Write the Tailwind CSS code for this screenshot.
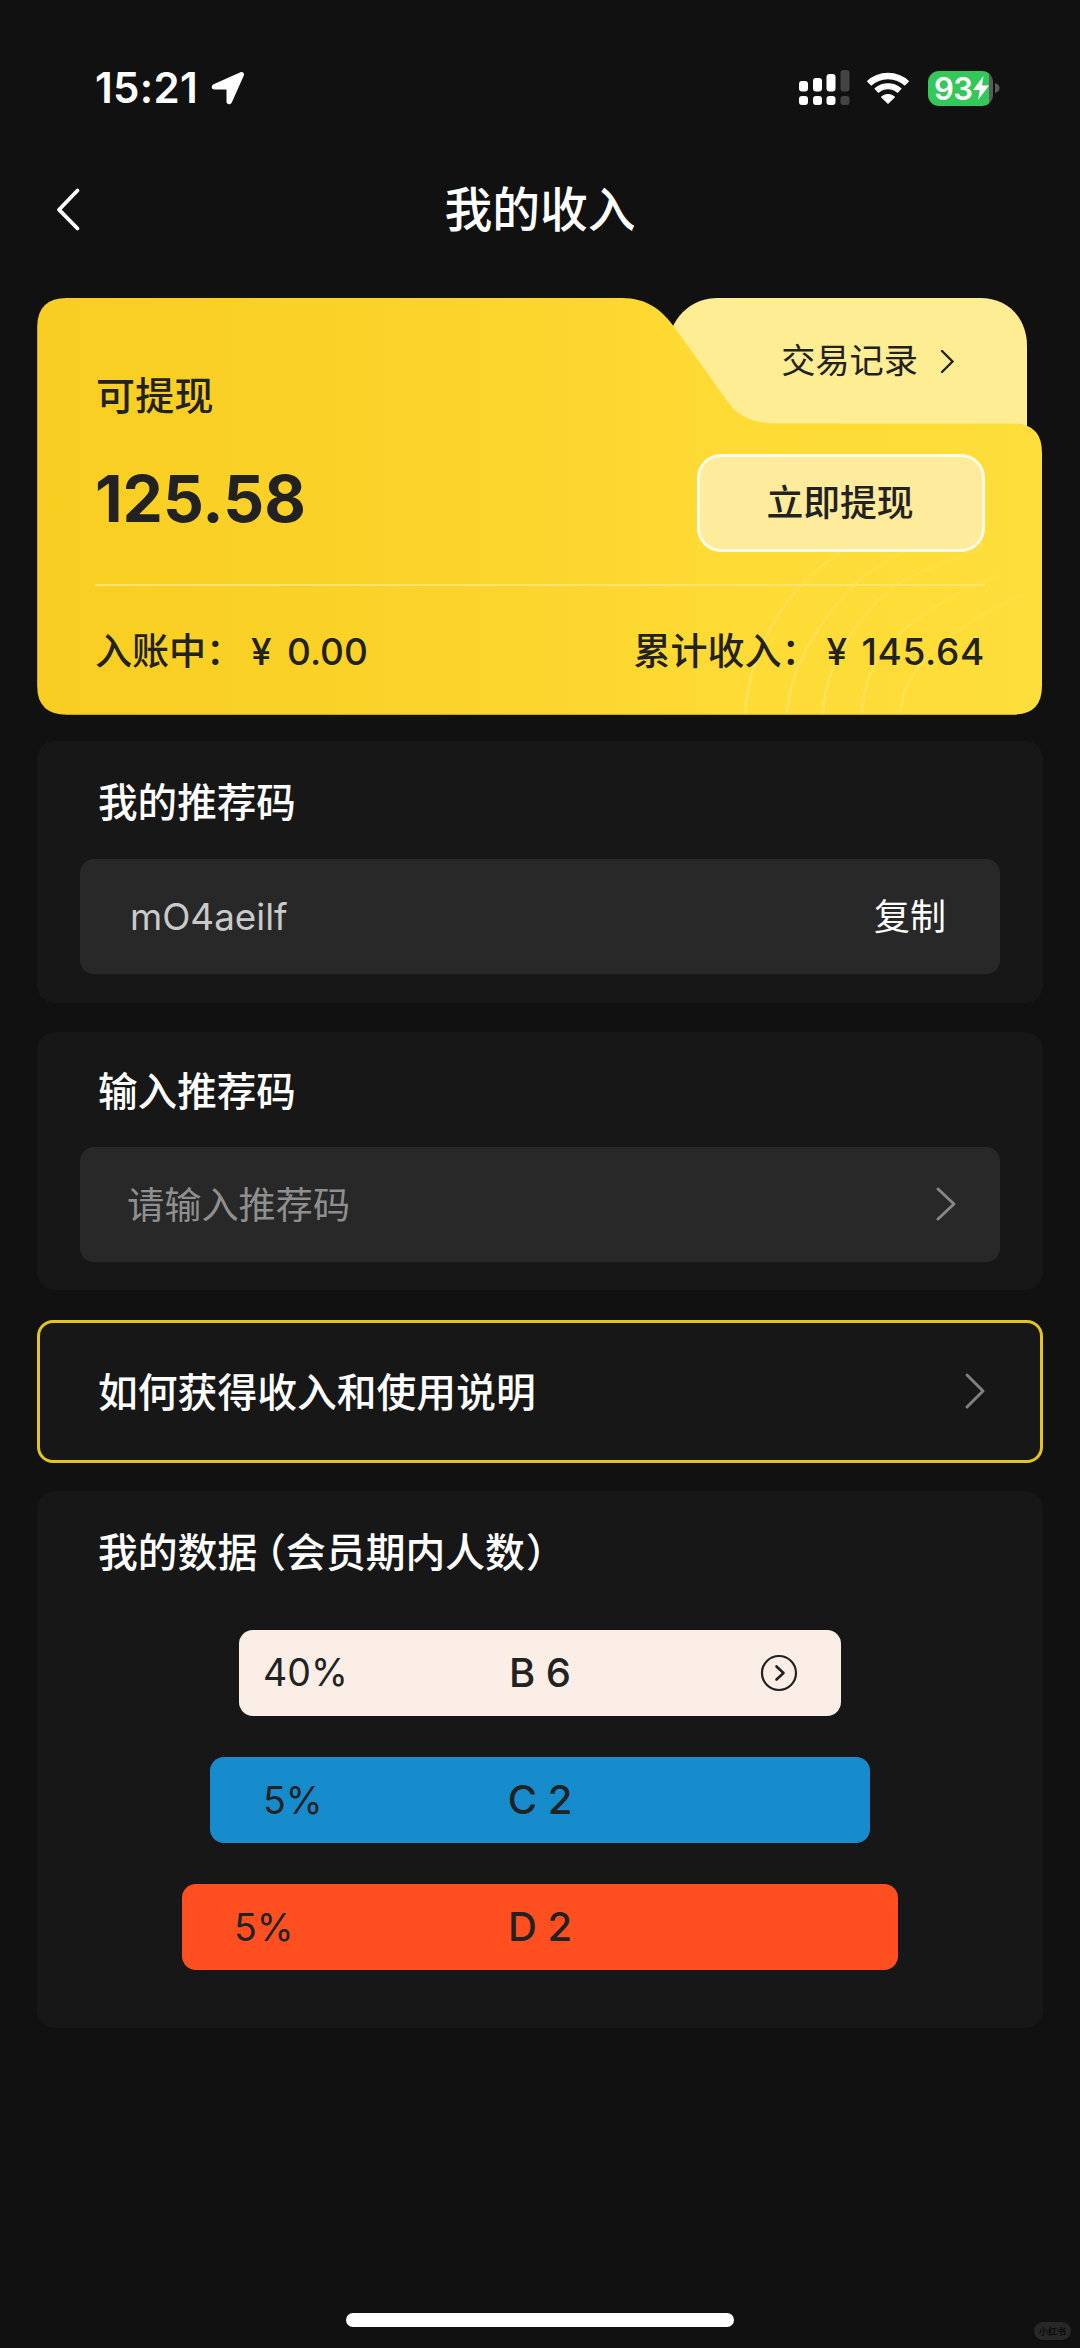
<!DOCTYPE html>
<html lang="zh-CN">
<head>
<meta charset="utf-8">
<title>我的收入</title>
<script src="https://cdn.jsdelivr.net/npm/@tailwindcss/browser@4"></script>
</head>
<body class="bg-[#111111]">
<div class="relative flex h-[2348px] w-[1080px] flex-col overflow-hidden bg-[#111111] font-['Inter','Noto_Sans_CJK_SC',sans-serif] text-white">

  <!-- status bar -->
  <header class="flex h-[176px] items-center justify-between pl-[95px] pr-[80px]">
    <div class="flex items-center gap-[13px]">
      <span class="text-[42px] font-semibold leading-none tracking-[0.3px]">15:21</span>
      <svg class="h-[34px] w-[34px]" viewBox="0 0 34 34" fill="#fff"><path d="M29.5 1.3 2.6 13.2C-.2 14.500.3 18.500 3.400 18.500H15.500V30.600C15.500 33.800 19.500 34.200 20.800 31.500L32.800 4.600C33.800 2.300 31.700.3 29.500 1.300Z"/></svg>
    </div>
    <div class="flex items-center">
      <svg class="h-[36px] w-[52px]" viewBox="0 0 52 36" fill="#fff">
        <rect x="0" y="11" width="9" height="10.500" rx="3"/><rect x="14" y="8" width="9" height="13.500" rx="3"/><rect x="27.500" y="4" width="9" height="17.500" rx="3"/><rect x="41.500" y="0" width="9" height="21.500" rx="3" fill="#444"/>
        <rect x="0" y="26" width="9" height="9" rx="3"/><rect x="14" y="26" width="9" height="9" rx="3"/><rect x="27.500" y="26" width="9" height="9" rx="3"/><rect x="41.500" y="26" width="9" height="9" rx="3" fill="#444"/>
      </svg>
      <svg class="ml-[15px] h-[34px] w-[44px]" viewBox="0 0 44 34">
        <path d="M3 12.500A27.500 27.500 0 0 1 41 12.500" fill="none" stroke="#fff" stroke-width="6.500"/>
        <path d="M10.300 19.800A17.200 17.200 0 0 1 33.700 19.800" fill="none" stroke="#fff" stroke-width="6"/>
        <path d="M22 32.500 15.300 26A10 10 0 0 1 28.700 26Z" fill="#fff" stroke="#fff" stroke-linejoin="round"/>
      </svg>
      <div class="ml-[18px] flex h-[35px] w-[65px] items-center rounded-[11px] bg-[linear-gradient(90deg,#34c759_61px,#5a5a5c_61px)] pl-[6px]">
        <span class="text-[31px] font-semibold leading-none tracking-[-0.5px]">93</span>
        <svg class="h-[24px] w-[16px]" viewBox="0 0 16 24" fill="#fff"><path d="M10.500 0 0 14H6.800L5 24 16 9.500H9Z"/></svg>
      </div>
      <svg class="ml-[2px] h-[10px] w-[5px]" viewBox="0 0 5 10" fill="#5a5a5c"><path d="M0 0Q4.500 1.500 4.500 5T0 10Z"/></svg>
    </div>
  </header>

  <!-- title bar -->
  <nav class="grid h-[122px] grid-cols-[1fr_auto_1fr] items-start pt-[10px]">
    <svg class="ml-[55px] mt-px h-[46px] w-[26px]" viewBox="0 0 26 46" fill="none" stroke="#fff" stroke-width="3.800" stroke-linecap="round" stroke-linejoin="round"><path d="M22.500 3.500 4 22.700 22.500 41.500"/></svg>
    <h1 class="text-[47.800px] font-medium leading-[48px]">我的收入</h1>
  </nav>

  <main class="flex flex-col px-[37px]">
    <!-- balance card -->
    <section class="relative h-[417px] text-[#222]">
      <svg class="absolute inset-0 h-[417px] w-[1006px]" viewBox="37 298 1006 417">
        <defs>
          <linearGradient id="gold"><stop offset="0" stop-color="#f9ce22"/><stop offset=".4" stop-color="#fbd32a"/><stop offset=".7" stop-color="#fedb35"/><stop offset="1" stop-color="#fede3b"/></linearGradient>
          <linearGradient id="ring" gradientUnits="userSpaceOnUse" x1="800" y1="714" x2="920" y2="560"><stop offset="0" stop-color="#fff" stop-opacity=".17"/><stop offset="1" stop-color="#fff" stop-opacity=".04"/></linearGradient>
        </defs>
        <path d="M668 340C674 315 692 298 718 298H980C1008 298 1027 318 1027 346V440H760Z" fill="#feed92"/>
        <path d="M67 298H622C647 298 662 310 675 328L728 402C739 418 755 423.500 780 423.500H1013Q1042 423.500 1042 453V686Q1042 714.700 1013 714.700H67Q37.200 714.700 37.200 686V327Q37.200 298 67 298Z" fill="url(#gold)"/>
        <g fill="none" stroke="url(#ring)" stroke-width="2.800">
          <path d="M745 714C748 665 771 617 800 587Q830 555 868 535"/><path d="M787 714C790 665 822 617 857 582Q871 568 920 542"/><path d="M823 714C824 665 860 612 897 585Q918 570 985 548"/><path d="M862 714C864 650 912 618 970 587L1000 575"/><path d="M900 714C903 665 952 628 1020 595"/>
        </g>
      </svg>
      <a class="absolute right-[88px] top-[43px] flex items-center gap-[22px] text-[34.200px] leading-[40px]">交易记录
        <svg class="h-[25px] w-[15px]" viewBox="0 0 15 25" fill="none" stroke="#222" stroke-width="2.400" stroke-linecap="round"><path d="M2 2 12.500 12.500 2 23"/></svg>
      </a>
      <div class="relative flex h-[286px] items-end justify-between pb-[32px] pl-[58px] pr-[58px]">
        <div class="flex flex-col pb-[23px]">
          <p class="pl-px text-[39px] font-medium leading-[40px] tracking-[0.300px]">可提现</p>
          <p class="mt-[53px] text-[64px] font-bold leading-[60px]">125.58</p>
        </div>
        <button class="h-[98px] w-[288px] rounded-[24px] border-[3px] border-[#fffbe6] bg-[#feeb9b] pr-[2px] text-[36.800px] font-medium leading-none">立即提现</button>
      </div>
      <div class="relative mx-[58px] h-[2px] bg-[#fee56c]"></div>
      <div class="relative flex justify-between px-[58px] pt-[43px] text-[37px] font-medium leading-[46px]">
        <p class="flex items-baseline"><span class="w-[156px]">入账中：</span><span class="w-[36px] text-[37px]">¥</span><span>0.00</span></p>
        <p class="flex items-baseline"><span class="w-[193px]">累计收入：</span><span class="w-[35px] text-[37px]">¥</span><span class="tracking-[0.700px]">145.64</span></p>
      </div>
    </section>

    <!-- my code -->
    <section class="mt-[26px] h-[262px] rounded-[18px] bg-[#171717] px-[43px] pt-[38px]">
      <h2 class="pl-[18px] text-[39.600px] font-medium leading-[48px]">我的推荐码</h2>
      <div class="mt-[32px] flex h-[115px] items-center justify-between rounded-[14px] bg-[#282828] pl-[50px] pr-[54px]">
        <span class="text-[36.800px] text-[#cacaca]">mO4aeilf</span>
        <button class="text-[36px]">复制</button>
      </div>
    </section>

    <!-- enter code -->
    <section class="mt-[29px] h-[258px] rounded-[18px] bg-[#171717] px-[43px] pt-[36px]">
      <h2 class="pl-[18px] text-[39.600px] font-medium leading-[48px]">输入推荐码</h2>
      <div class="mt-[31px] flex h-[115px] items-center justify-between rounded-[14px] bg-[#282828] pl-[47px] pr-[43px]">
        <span class="pt-[2px] text-[37.200px] text-[#8f8f8f]">请输入推荐码</span>
        <svg class="mb-px h-[36px] w-[22px]" viewBox="0 0 22 36" fill="none" stroke="#878787" stroke-width="3" stroke-linecap="round" stroke-linejoin="round"><path d="M3 3 19 18 3 33"/></svg>
      </div>
    </section>

    <!-- help -->
    <a class="mt-[30px] flex h-[143px] items-center justify-between rounded-[16px] border-[3px] border-[#e4c41f] bg-[#171717] pl-[58px] pr-[54px]">
      <span class="pt-[2px] text-[39.800px] font-medium leading-[48px]">如何获得收入和使用说明</span>
      <svg class="mb-px h-[38px] w-[22px]" viewBox="0 0 22 38" fill="none" stroke="#808080" stroke-width="3" stroke-linecap="round" stroke-linejoin="round"><path d="M3 3 19 19 3 35"/></svg>
    </a>

    <!-- data -->
    <section class="mt-[28px] flex h-[537px] flex-col items-center rounded-[18px] bg-[#171717] pt-[38px] text-[37.500px] text-[#222]">
      <h2 class="flex self-start pl-[61px] text-[39.800px] font-medium leading-[48px] text-white"><span>我的数据</span><span class="ml-[9px] [font-feature-settings:'halt']">（</span><span>会员期内人数</span><span class="ml-px [font-feature-settings:'halt']">）</span></h2>
      <div class="mt-[53px] grid h-[86px] w-[602px] grid-cols-3 items-center rounded-[14px] bg-[#fbeee7]">
        <span class="pl-[24px]">40%</span><span class="text-center text-[40px] font-medium">B 6</span>
        <svg class="mr-[43px] h-[38px] w-[38px] justify-self-end" viewBox="0 0 38 38" fill="none" stroke="#222" stroke-width="2.200" stroke-linecap="round" stroke-linejoin="round"><circle cx="19" cy="19" r="17"/><path d="M16.500 12.500 23.500 19 16.500 25.500" stroke-width="2.600"/></svg>
      </div>
      <div class="mt-[41px] grid h-[86px] w-[660px] grid-cols-3 items-center rounded-[14px] bg-[#178ccd]">
        <span class="pl-[53px] pt-[2px]">5%</span><span class="text-center text-[40px] font-medium">C 2</span>
      </div>
      <div class="mt-[41px] grid h-[86px] w-[716px] grid-cols-3 items-center rounded-[14px] bg-[#ff4f21]">
        <span class="pl-[52px] pt-[2px]">5%</span><span class="text-center text-[40px] font-medium">D 2</span>
      </div>
    </section>
  </main>

  <!-- home indicator and watermark -->
  <div class="absolute bottom-[21px] left-[346px] h-[14px] w-[388px] rounded-full bg-white"></div>
  <div class="absolute bottom-[8px] right-[9px] flex h-[18px] w-[37px] items-center justify-center rounded-full bg-[#282828] text-[9px] font-bold leading-none text-[#0c0c0c]">小红书</div>
</div>
</body>
</html>
